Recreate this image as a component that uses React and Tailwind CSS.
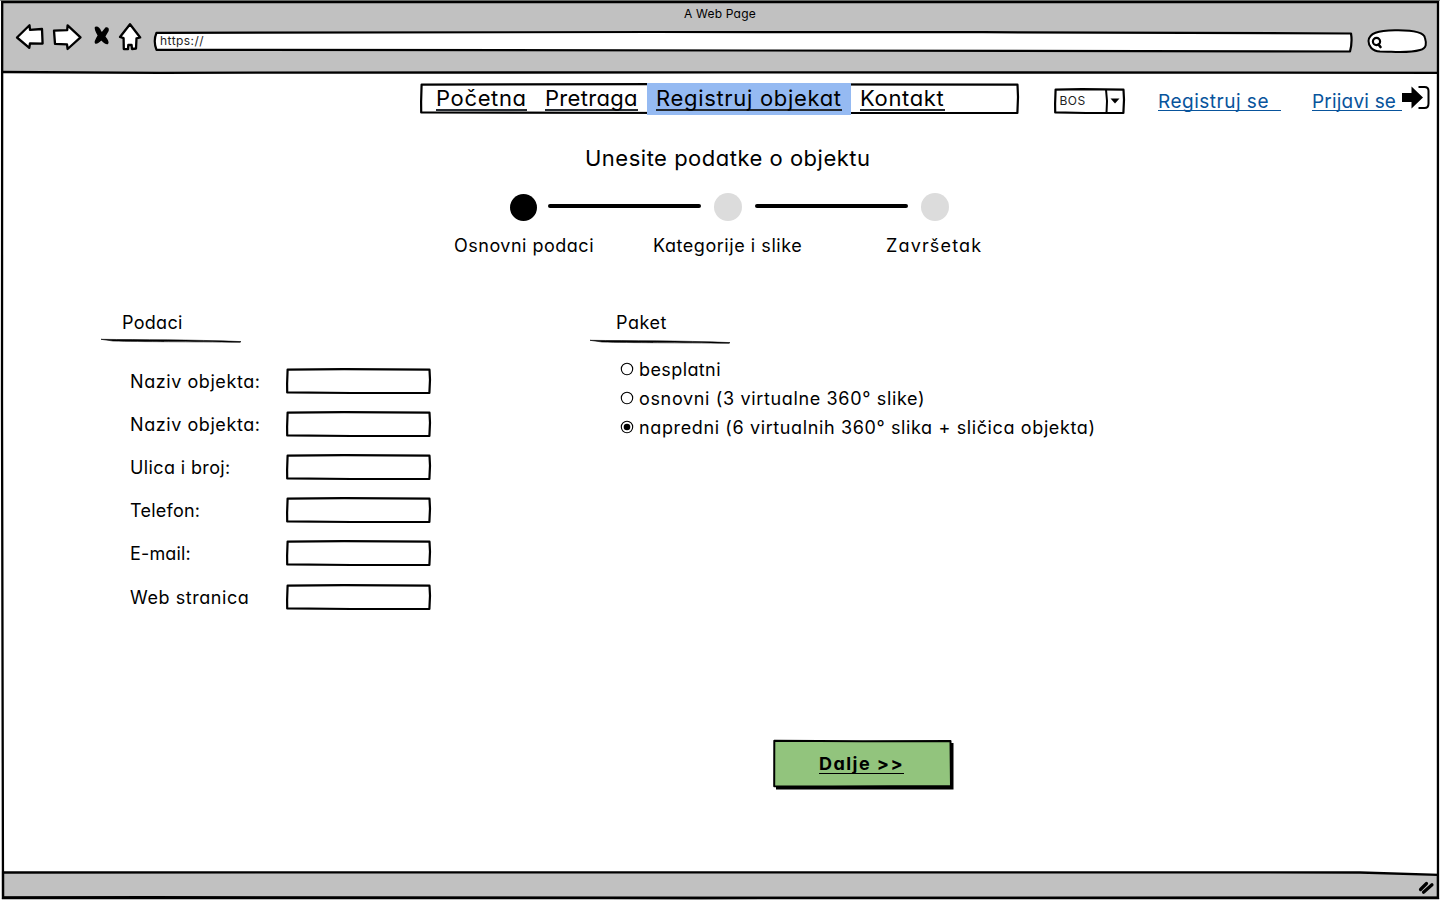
import React from "react";

/* Hand-drawn rectangle outline that fills its positioned parent. */
function Sketch({ w, h, fill = "#fff", stroke = 2.2, children }) {
  const d = `M1.6 1.6 L${w * 0.4} 1.2 L${w - 1.5} 1.7 L${w - 1} ${h * 0.45} L${w - 1.6} ${h - 1.1} L${w * 0.45} ${h - 1} L1.2 ${h - 1.6} L1.1 ${h * 0.6} Z`;
  return (
    <svg className="absolute inset-0 overflow-visible" width={w} height={h} viewBox={`0 0 ${w} ${h}`} aria-hidden="true">
      <path d={d} fill={fill} stroke="#000" strokeWidth={stroke} strokeLinejoin="round" />
      {children}
    </svg>
  );
}

function ToolbarIcons() {
  return (
    <svg width="130" height="32" viewBox="14 22 130 32" aria-hidden="true" fill="#fff" stroke="#000" strokeWidth="2.3" strokeLinejoin="round" strokeLinecap="round">
      <path d="M17 37.5 L29.5 25.2 L30 29.8 L42 29 L42.6 43.6 L30 43.3 L29.3 47.8 Z" />
      <path d="M54 30.7 L67.2 30.2 L67.6 25.3 L80.5 37.4 L67.6 49 L67 44.4 L55 43.8 Z" />
      <path d="M95.500 27.500 Q98.500 26.500 100.500 31.500 L102 33 L106 28 Q108.500 27.500 108 30.500 L104.500 36.500 Q109 42 107.500 43.500 Q105.500 44 101.500 39.500 Q97 43.800 95.500 42.800 Q94.500 42 98.500 35.500 Q95 30 95.500 27.500 Z" fill="#000" strokeWidth="1.500" />
      <path d="M130 24.200 L120 37 L123.600 38.200 L123.800 49 L128 49.200 L128.300 45 L131.600 45 L132 49 L136 48.500 L136.500 38.300 L140.200 37.500 Z" />
    </svg>
  );
}

function BrowserBar() {
  return (
    <header className="h-[72px] shrink-0 bg-[#c1c1c1] flex flex-col">
      <div className="h-7 pl-[684px] text-[12px] leading-[27px] tracking-[0.2px]">A Web Page</div>
      <div className="flex pl-[14px]">
        <div className="-mt-[6px] w-[139px]"><ToolbarIcons /></div>
        <div className="relative mt-[3px] w-[1200px] h-[21px]">
          <svg className="absolute inset-0 overflow-visible" width="1200" height="21" aria-hidden="true">
            <path d="M3.500 1.800 L500 1 L830 1.200 L1198 2.500 Q1199.500 11 1197 20.500 L600 19.500 L3.500 18.800 Q0 10 3.500 1.800 Z" fill="#fff" stroke="#000" strokeWidth="2.200" strokeLinejoin="round" />
          </svg>
          <span className="relative block pl-[7px] text-[12px] leading-[20px] tracking-[0.45px] text-[#222]">https://</span>
        </div>
        <svg className="ml-[13px]" width="64" height="27" viewBox="1366 28 64 27" aria-hidden="true" fill="#fff" stroke="#000" strokeLinecap="round">
          <path d="M1368.500 41 C1369 33 1378 30.600 1395 30.300 C1412 30 1424 32 1425 38 C1426.500 43 1427 48.500 1420 50 C1408 53.500 1394 51.500 1380 51.500 C1372 51 1368.500 46 1368.500 41 Z" strokeWidth="2" />
          <circle cx="1376.500" cy="41.500" r="3.600" strokeWidth="2.200" />
          <path d="M1378.500 44.500 L1380.500 47" strokeWidth="2.600" />
        </svg>
      </div>
    </header>
  );
}

const navItems = [
  { label: "Početna", cls: "w-[109px]", track: "tracking-[0.65px]" },
  { label: "Pretraga", cls: "w-[111px]", track: "tracking-[0.3px]" },
  { label: "Registruj objekat", cls: "w-[204px] bg-[#95baf2]", track: "tracking-[0.68px]" },
  { label: "Kontakt", cls: "w-[103px]", track: "tracking-[0.65px]" },
];

function TopNav() {
  return (
    <div className="flex h-[42px] pl-[420px] pt-[11px]">
      <nav className="relative w-[599px] h-[31px]">
        <Sketch w={599} h={31} />
        <ul className="relative flex pl-[7px]">
          {navItems.map((n) => (
            <li key={n.label} className={`h-8 px-[9px] ${n.cls}`}>
              <a className={`block h-[28px] border-b-2 border-[#252a30] whitespace-nowrap text-[22px] leading-[30px] ${n.track}`}>{n.label}</a>
            </li>
          ))}
        </ul>
      </nav>
      <div className="relative ml-[35px] mt-[5px] w-[71px] h-[26px]">
        <Sketch w={71} h={26}>
          <path d="M52 1.500 L53 13 L52.500 25" fill="none" stroke="#000" strokeWidth="2" />
          <path d="M56.500 10.500 h9 l-4.500 5 Z" fill="#000" />
        </Sketch>
        <span className="relative block pl-[5.500px] text-[12px] leading-[25px] text-[#222] tracking-[0.5px]">BOS</span>
      </div>
      <a className="ml-[33px] mt-[5px] block w-[123px] h-[23px] border-b-[1.500px] border-[#08549c] text-[#08549c] text-[19px] leading-[28px] whitespace-nowrap tracking-[0.5px]">Registruj se</a>
      <a className="ml-[31px] mt-[5px] block w-[90px] h-[23px] border-b-[1.500px] border-[#08549c] text-[#08549c] text-[19px] leading-[28px] whitespace-nowrap tracking-[0.2px]">Prijavi se</a>
      <svg className="-ml-px mt-[2px]" width="29" height="26" viewBox="1401 85 29 26" aria-hidden="true">
        <path d="M1402 93 H1411.500 V86.500 L1423 97.500 L1411.500 108.500 V102 H1402 Z" fill="#000" />
        <path d="M1418.500 87 H1424.500 Q1428.500 87 1428.500 91 V103.500 Q1428.500 108 1424.500 108 H1418.500" fill="none" stroke="#000" strokeWidth="2" />
      </svg>
    </div>
  );
}

function Stepper() {
  return (
    <div>
      <div className="flex items-center h-[28px] pl-[510px] mt-[20px]">
        <span className="size-[27px] rounded-full bg-black" />
        <span className="ml-[11px] -mt-[3px] w-[153px] h-[4px] rounded-full bg-black" />
        <span className="ml-[13px] size-[28px] rounded-full bg-[#dcdcdc]" />
        <span className="ml-[13px] -mt-[3px] w-[153px] h-[4px] rounded-full bg-black" />
        <span className="ml-[13px] size-[28px] rounded-full bg-[#dcdcdc]" />
      </div>
      <div className="flex pl-[454px] mt-[11px] text-[18px] leading-[28px] h-[26px] whitespace-nowrap">
        <span className="w-[199px] tracking-[0.5px]">Osnovni podaci</span>
        <span className="w-[233px] tracking-[0.55px]">Kategorije i slike</span>
        <span className="tracking-[1.15px]">Završetak</span>
      </div>
    </div>
  );
}

function Rule() {
  return (
    <svg className="block" width="140" height="5" aria-hidden="true">
      <path d="M0 1.300 C40 1.900 90 1.500 140 3.600 L139 4.300 C90 3.500 40 4 12 3 Z" fill="#000" stroke="#000" strokeWidth="0.600" />
    </svg>
  );
}

const fields = [
  { label: "Naziv objekta:", gap: "mb-[17px]", track: "tracking-[0.57px]" },
  { label: "Naziv objekta:", gap: "mb-[17px]", track: "tracking-[0.57px]" },
  { label: "Ulica i broj:", gap: "mb-[17px]", track: "tracking-[0.38px]" },
  { label: "Telefon:", gap: "mb-[17px]", track: "tracking-[0.25px]" },
  { label: "E-mail:", gap: "mb-[18px]", track: "tracking-[0.15px]" },
  { label: "Web stranica", gap: "", track: "tracking-[0.57px]" },
];

const packages = [
  { label: "besplatni", track: "tracking-[0.4px]" },
  { label: "osnovni (3 virtualne 360° slike)", track: "tracking-[0.65px]" },
  { label: "napredni (6 virtualnih 360° slika + sličica objekta)", track: "tracking-[0.62px]", on: true },
];

function Forms() {
  return (
    <div className="flex pl-[101px] mt-[51px] text-[18px] whitespace-nowrap">
      <section className="w-[489px]">
        <h2 className="pl-[21px] leading-[28px] h-[29px] tracking-[0.3px]">Podaci</h2>
        <Rule />
        <div className="mt-[25px] pl-[29px]">
          {fields.map((f, i) => (
            <label key={i} className={`flex h-[26px] ${f.gap}`}>
              <span className={`w-[156px] leading-[28px] ${f.track}`}>{f.label}</span>
              <span className="relative w-[145px] h-[26px]"><Sketch w={145} h={26} /></span>
            </label>
          ))}
        </div>
      </section>
      <section>
        <h2 className="pl-[26px] leading-[28px] h-[30px] tracking-[0.5px]">Paket</h2>
        <Rule />
        <div className="mt-[10px] pl-[30px]">
          {packages.map((p) => (
            <label key={p.label} className="flex items-center h-[29px]">
              <svg width="14" height="14" viewBox="0 0 14 14" aria-hidden="true">
                <circle cx="7" cy="7" r="5.700" fill="#fff" stroke="#000" strokeWidth="1.100" />
                {p.on && <circle cx="7" cy="7" r="3.300" />}
              </svg>
              <span className={`pl-[5px] pt-px leading-[29px] ${p.track}`}>{p.label}</span>
            </label>
          ))}
        </div>
      </section>
    </div>
  );
}

export default function App() {
  return (
    <div className="relative flex flex-col w-[1440px] h-[900px] overflow-hidden bg-white text-black font-['Inter','Liberation_Sans',sans-serif] [font-feature-settings:'cv11'_1]">
      <BrowserBar />
      <main className="h-[800px] shrink-0 flex flex-col">
        <TopNav />
        <h1 className="pl-[585px] mt-[29px] h-[30px] text-[22px] leading-[30px] whitespace-nowrap tracking-[0.5px]">Unesite podatke o objektu</h1>
        <Stepper />
        <Forms />
        <div className="mt-auto mb-[82px] pl-[773px]">
          <button className="relative flex w-[181px] h-[50px] pl-[46px] pt-[9px] text-left">
            <svg className="absolute inset-0 overflow-visible" width="181" height="50" aria-hidden="true">
              <path d="M3 4 L180.500 3 L180.500 49.500 L3 49.500 Z" fill="#000" />
              <path d="M1.300 0.800 L90 1.200 L177.500 1 L178 46 L60 46.500 L1.200 46.200 Z" fill="#92c47d" stroke="#000" strokeWidth="2" strokeLinejoin="round" />
            </svg>
            <span className="relative block w-[85px] h-[25px] border-b-[1.500px] border-black text-[18px] font-bold leading-[30px] whitespace-nowrap tracking-[1.45px]">Dalje &gt;&gt;</span>
          </button>
        </div>
      </main>
      <footer className="h-[28px] shrink-0 flex justify-end">
        <svg width="1440" height="28" viewBox="0 872 1440 28" aria-hidden="true" className="overflow-visible">
          <path d="M3 872.500 L700 872.300 L1360 872.500 L1438 874.800 L1438 898 L3 898 Z" fill="#c1c1c1" stroke="#000" strokeWidth="2.300" />
          <path d="M1420.500 889.500 L1426.500 883.500 M1423.500 892.300 L1432 884.800" stroke="#000" strokeWidth="3.200" strokeLinecap="round" />
        </svg>
      </footer>
      <svg className="absolute inset-0 pointer-events-none" width="1440" height="900" aria-hidden="true" fill="none" stroke="#000">
        <path d="M0 0.500 H1440" stroke="#8b8f8b" />
        <path d="M0.800 1 V898 M1439.500 1 V898" stroke="#fff" strokeWidth="1.600" />
        <path d="M2.200 2 H1438 L1437.800 450 L1438 897.500 L700 898 L150 897.200 L3 897.500 L2 400 Z" strokeWidth="2.300" />
        <path d="M3 72 L160 72.800 L720 72.300 L1438 72.800" strokeWidth="2.300" />
      </svg>
    </div>
  );
}
